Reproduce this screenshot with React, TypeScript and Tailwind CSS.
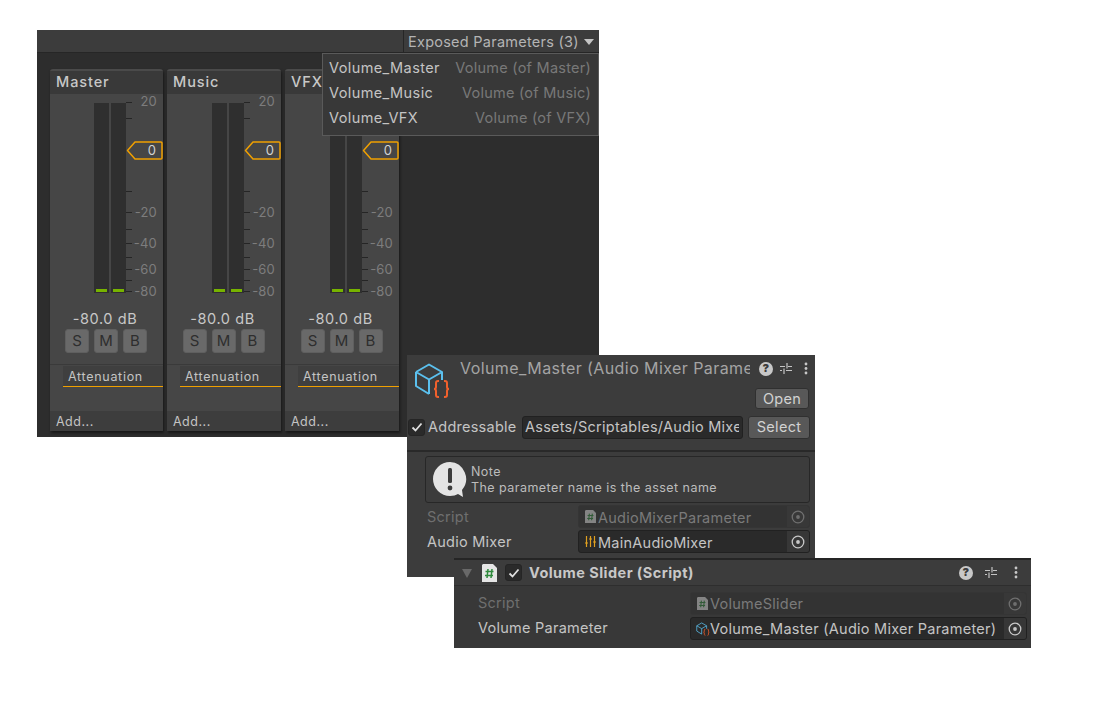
const font = { fontFamily: "Inter, 'Liberation Sans', sans-serif" };

const ticks = [8, 24, 97, 118, 135, 149, 163, 175, 186, 197];
const labels = [
  { text: "20", y: 7 },
  { text: "-20", y: 118 },
  { text: "-40", y: 149 },
  { text: "-60", y: 175 },
  { text: "-80", y: 197 },
];

function Fader({ left }: { left: number }) {
  return (
    <div className="relative h-[214px] w-full">
      {/* meters */}
      <div className="absolute top-[9px] flex gap-[2px]" style={{ left }}>
        {[0, 1].map((m) => (
          <div key={m} className="flex h-[190px] w-[15px] flex-col justify-end bg-[#2f2f2f] px-[2px] pb-[1px]">
            <div className="h-[3px] bg-[#77b300]" />
          </div>
        ))}
      </div>
      {ticks.map((y) => (
        <div key={y} className="absolute h-[1px] w-[6px] bg-[#252525]" style={{ left: left + 32, top: y }} />
      ))}
      {labels.map((l) => (
        <div key={l.text} className="absolute right-[6px] text-[13px] leading-[16px] tracking-[0.2px] text-[#7d7d7d]" style={{ top: l.y - 8 }}>
          {l.text}
        </div>
      ))}
      <svg className="absolute top-[47px] right-0" width="37" height="19" viewBox="0 0 37 19">
        <path d="M1.5 9.5 L9 1 H35 Q36 1 36 2 V17 Q36 18 35 18 H9 Z" fill="#464646" stroke="#f0a000" strokeWidth="1.5" strokeLinejoin="round" />
      </svg>
      <div className="absolute top-[47px] right-[7px] text-[13px] leading-[19px] text-[#d2d2d2]">0</div>
    </div>
  );
}

function Strip({ name, width, left }: { name: string; width: number; left: number }) {
  return (
    <div className="flex h-[362px] flex-col rounded-t-[3px] border-t-2 border-[#4a4a4a] bg-[#464646] shadow-[1px_2px_3px_rgba(0,0,0,0.5)]" style={{ width }}>
      <div className="flex h-[23px] shrink-0 items-center bg-[#393939] pb-[2px] pl-[6px] text-[14.5px] font-medium tracking-[0.9px] text-[#c8c8c8]">
        {name}
      </div>
      <Fader left={left} />
      <div className="mt-[2px] pr-[3px] text-center text-[14.5px] leading-[18px] tracking-[0.6px] text-[#c8c8c8]">-80.0 dB</div>
      <div className="mt-[1px] flex justify-center gap-[5px] pr-[1px]">
        {["S", "M", "B"].map((b) => (
          <div key={b} className="flex h-[24px] w-[24px] items-center justify-center rounded-[3px] border border-[#5f5f5f] bg-[#696969] text-[15px] text-[#2e2e2e]">
            {b}
          </div>
        ))}
      </div>
      <div className="mt-[11px] border-t border-[#3a3a3a] pl-[13px] pt-[1px]">
        <div className="h-[21px] border-b border-[#f0a000] bg-[#3f3f3f] pl-[5px] text-[12.5px] leading-[21px] tracking-[0.7px] text-[#c4c4c4]">
          Attenuation
        </div>
      </div>
      <div className="mt-auto flex h-[20px] items-center bg-[#3d3d3d] pt-[2px] pl-[6px] text-[12.5px] tracking-[0.5px] text-[#c4c4c4]">Add...</div>
    </div>
  );
}

function Target({ dim }: { dim?: boolean }) {
  const c = dim ? "#6f6f6f" : "#c8c8c8";
  return (
    <svg width="14" height="14" viewBox="0 0 14 14">
      <circle cx="7" cy="7" r="5.8" fill="none" stroke={c} strokeWidth="1.3" />
      <circle cx="7" cy="7" r="1.9" fill={c} />
    </svg>
  );
}

function ObjectField({ icon, text, dim, width, h, lower }: { icon: React.ReactNode; text: string; dim?: boolean; width: number; h: number; lower?: boolean }) {
  return (
    <div
      className={`flex items-center overflow-hidden rounded-[3px] border text-[14.5px] tracking-[0.25px] ${dim ? "border-[#353535] bg-[#333333] text-[#7a7a7a]" : "border-[#212121] bg-[#2a2a2a] text-[#c4c4c4]"}`}
      style={{ width, height: h }}
    >
      <span className="flex w-[19px] shrink-0 items-center justify-center pl-[4px]">{icon}</span>
      <span className={`flex-1 truncate ${lower ? "pt-[2px]" : ""}`}>{text}</span>
      <span className={`flex h-full w-[22px] shrink-0 items-center justify-center ${dim ? "bg-[#383838]" : "bg-[#373737]"}`}>
        <Target dim={dim} />
      </span>
    </div>
  );
}

function ScriptIcon({ size = 16, dim }: { size?: number; dim?: boolean }) {
  const w = size;
  const h = size * 1.2;
  return (
    <svg width={w} height={h} viewBox="0 0 15 18" className={dim ? "opacity-45" : ""}>
      <path d="M1 0 H11 L15 4 V18 H0 V1 Z" fill="#e6e6e6" />
      <path d="M6 5 L5 14 M10 5 L9 14 M3.5 7.5 H11.5 M3 11.5 H11" stroke="#2f8a3c" strokeWidth="1.5" fill="none" />
    </svg>
  );
}

function CubeIcon({ size = 37 }: { size?: number }) {
  return (
    <svg width={size} height={size} viewBox="0 0 37 37" fill="none">
      <path d="M2 10 L15 2.5 L28 10 V18 M2 10 V24 L15 32 M2 10 L15 17.5 V32 M15 17.5 L28 10" stroke="#5bc0ee" strokeWidth="2" strokeLinejoin="round" />
      <path d="M25 19 H24 Q22 19 22 21 V25 Q22 27 20 27 Q22 27 22 29 V33 Q22 35 24 35 H25 M30 19 H31 Q33 19 33 21 V25 Q33 27 35 27 Q33 27 33 29 V33 Q33 35 31 35 H30" stroke="#f0602c" strokeWidth="2" />
    </svg>
  );
}

function MixerIcon() {
  return (
    <svg width="11" height="13" viewBox="0 0 11 13" stroke="#e0a020" strokeWidth="1.2" fill="none">
      <path d="M1.5 1 V12 M5.5 1 V12 M9.5 1 V12 M0 8 H3 M4 4 H7 M8 7 H11" />
    </svg>
  );
}

function HeaderIcons({ gapA, gapB }: { gapA: string; gapB: string }) {
  return (
    <div className="flex items-center">
      <div className="flex h-[14px] w-[14px] items-center justify-center rounded-full bg-[#c8c8c8] text-[11px] font-black text-[#3c3c3c]">?</div>
      <svg width="14" height="13" viewBox="0 0 14 13" stroke="#c4c4c4" strokeWidth="1.2" fill="none" className={gapA}>
        <path d="M1 4.5 H6 M9 4.5 H13 M1 8.5 H3 M7 8.5 H13 M8 1 V6.5 M5 6.5 V12" />
      </svg>
      <svg width="4" height="13" viewBox="0 0 4 13" fill="#c8c8c8" className={gapB}>
        <circle cx="2" cy="2" r="1.4" />
        <circle cx="2" cy="6.5" r="1.4" />
        <circle cx="2" cy="11" r="1.4" />
      </svg>
    </div>
  );
}

function Check({ size = 18 }: { size?: number }) {
  return (
    <div className="flex items-center justify-center rounded-[3px] border border-[#252525] bg-[#2a2a2a]" style={{ width: size, height: size }}>
      <svg width="12" height="12" viewBox="0 0 12 12" fill="none" stroke="#e0e0e0" strokeWidth="1.8">
        <path d="M1.5 6.5 L4.5 9.5 L10.5 2.5" />
      </svg>
    </div>
  );
}

function Btn({ text, w, h }: { text: string; w: number; h: number }) {
  return (
    <div className="flex items-center justify-center rounded-[3px] border border-[#303030] bg-[#585858] text-[14.5px] tracking-[0.3px] text-[#d2d2d2]" style={{ width: w, height: h }}>
      {text}
    </div>
  );
}

export default function App() {
  return (
    <div className="relative h-[707px] w-[1104px] overflow-hidden bg-white" style={font}>
      {/* Audio mixer window */}
      <div className="absolute top-[30px] left-[37px] flex h-[407px] w-[562px] flex-col bg-[#2d2d2d]">
        <div className="flex h-[23px] shrink-0 justify-end border-b border-[#262626] bg-[#3c3c3c]">
          <div className="flex w-[196px] items-center gap-[5px] border-l border-[#262626] pt-[2px] pl-[4px] text-[14.5px] tracking-[0.25px] text-[#b4b4b4]">
            Exposed Parameters (3)
            <svg width="10" height="6" viewBox="0 0 10 6"><path d="M0 0 H10 L5 6 Z" fill="#c4c4c4" /></svg>
          </div>
        </div>
        <div className="flex gap-1 pt-[16px] pl-[13px]">
          <Strip name="Master" width={113} left={44} />
          <Strip name="Music" width={114} left={45} />
          <Strip name="VFX" width={114} left={45} />
        </div>
        {/* Exposed parameters popup */}
        <div className="absolute top-[23px] left-[285px] w-[277px] border border-[#5a5a5a] bg-[#383838] pt-[1px] pr-[7px] pb-[5px] pl-[6px] text-[14.5px] tracking-[0.25px]">
          {[
            ["Volume_Master", "Volume (of Master)"],
            ["Volume_Music", "Volume (of Music)"],
            ["Volume_VFX", "Volume (of VFX)"],
          ].map(([a, b]) => (
            <div key={a} className="flex h-[25px] items-center justify-between">
              <span className="tracking-[0.4px] text-[#c4c4c4]">{a}</span>
              <span className="text-[#787878]">{b}</span>
            </div>
          ))}
        </div>
      </div>

      {/* Audio mixer parameter inspector */}
      <div className="absolute top-[355px] left-[407px] h-[222px] w-[408px] bg-[#3c3c3c] text-[14.5px] tracking-[0.25px] text-[#c4c4c4]">
        <div className="flex h-[60px]">
          <div className="w-[53px] shrink-0 pt-[7px] pl-[7px]">
            <CubeIcon />
          </div>
          <div className="flex-1">
            <div className="flex h-[27px] items-center justify-between pr-[7px]">
              <span className="mb-[2px] w-[290px] overflow-hidden text-[16px] tracking-[0.42px] whitespace-nowrap text-[#a4a4a4]">
                Volume_Master (Audio Mixer Parameter)
              </span>
              <HeaderIcons gapA="ml-[6px]" gapB="ml-[11px]" />
            </div>
            <div className="mt-[6px] flex justify-end pr-[6px]">
              <Btn text="Open" w={54} h={21} />
            </div>
          </div>
        </div>
        <div className="flex h-[24px] items-center pl-[1px]">
          <Check size={17} />
          <span className="ml-[3px] w-[94px] shrink-0">Addressable</span>
          <div className="flex h-[23px] w-[221px] items-center rounded-[3px] border border-[#212121] bg-[#2a2a2a] pr-[3px] pl-[2px]">
            <span className="overflow-hidden whitespace-nowrap">Assets/Scriptables/Audio Mixer</span>
          </div>
          <div className="ml-[5px]">
            <Btn text="Select" w={62} h={23} />
          </div>
        </div>
        <div className="mt-[11px] h-[2px] bg-[#292929]" />
        <div className="mt-[4px] ml-[18px] flex h-[47px] w-[385px] items-center rounded-[3px] border border-[#272727] bg-[#3c3c3c] pl-[7px]">
          <svg width="34" height="36" viewBox="0 0 34 36" className="shrink-0">
            <path d="M17 0 A17 17 0 1 0 17 34 Q22 34 25 32 L30 35 L29 28 A17 17 0 0 0 17 0 Z" fill="#e4e4e4" />
            <rect x="15" y="6" width="4" height="15" rx="1.5" fill="#3c3c3c" />
            <circle cx="17" cy="26" r="2.4" fill="#3c3c3c" />
          </svg>
          <div className="ml-[4px] text-[12.5px] leading-[16px] tracking-[0.45px] text-[#bcbcbc]">
            <div>Note</div>
            <div>The parameter name is the asset name</div>
          </div>
        </div>
        <div className="mt-[2px] ml-[20px] flex h-[23px] items-center">
          <span className="w-[151px] shrink-0 text-[#6f6f6f]">Script</span>
          <ObjectField icon={<ScriptIcon size={11} dim />} text="AudioMixerParameter" dim width={232} h={23} lower />
        </div>
        <div className="mt-[2px] ml-[20px] flex h-[23px] items-center">
          <span className="w-[151px] shrink-0">Audio Mixer</span>
          <ObjectField icon={<MixerIcon />} text="MainAudioMixer" width={232} h={23} lower />
        </div>
      </div>

      {/* Volume slider component */}
      <div className="absolute top-[558px] left-[454px] h-[90px] w-[577px] border-t-2 border-[#252525] bg-[#383838] text-[14.5px] tracking-[0.25px] text-[#c4c4c4]">
        <div className="flex h-[26px] items-center border-b border-[#2e2e2e] bg-[#3c3c3c] pr-[13px]">
          <svg width="10" height="10" viewBox="0 0 10 10" className="ml-[8px]"><path d="M0 1 H10 L5 10 Z" fill="#696969" /></svg>
          <span className="ml-[10px]"><ScriptIcon size={15} /></span>
          <span className="ml-[8px]"><Check size={17} /></span>
          <span className="ml-[7px] flex-1 font-bold tracking-[0.45px] text-[#c8c8c8]">Volume Slider (Script)</span>
          <HeaderIcons gapA="ml-[11px]" gapB="ml-[16px]" />
        </div>
        <div className="mt-[6px] ml-[24px] flex h-[23px] items-center">
          <span className="mb-[1px] w-[212px] shrink-0 text-[#6f6f6f]">Script</span>
          <ObjectField icon={<ScriptIcon size={11} dim />} text="VolumeSlider" dim width={337} h={23} />
        </div>
        <div className="mt-[2px] ml-[24px] flex h-[23px] items-center">
          <span className="mb-[1px] w-[212px] shrink-0">Volume Parameter</span>
          <ObjectField icon={<CubeIcon size={14} />} text="Volume_Master (Audio Mixer Parameter)" width={337} h={23} />
        </div>
      </div>
    </div>
  );
}
